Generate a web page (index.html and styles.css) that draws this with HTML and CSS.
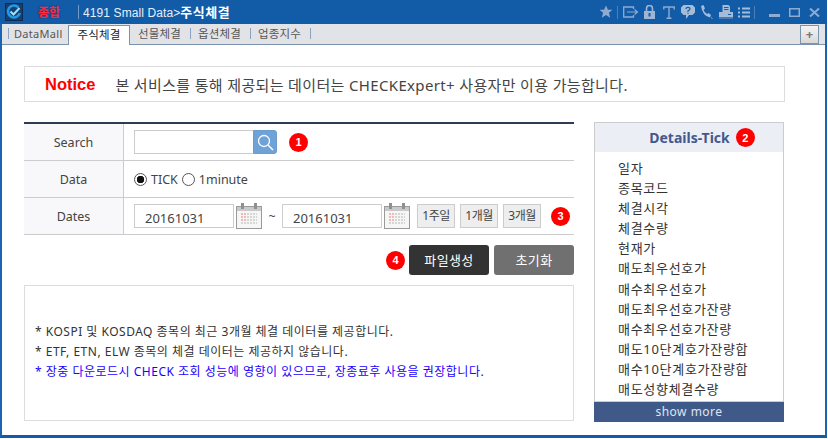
FILE: index.html
```html
<!DOCTYPE html>
<html lang="ko">
<head>
<meta charset="utf-8">
<title>4191 Small Data</title>
<link rel="stylesheet" href="styles.css">
</head>
<body>
<div class="window">
  <header class="titlebar">
    <svg class="logo" width="18" height="18" viewBox="0 0 18 18"><rect x="0.5" y="0.5" width="17" height="17" fill="#17406f" stroke="#0e2c52"/><path d="M13.500 4.500A6 6 0 1 0 14.800 10" fill="none" stroke="#1f9ae6" stroke-width="2.600"/><path d="M5.500 8.500l3 3 6-6.500" fill="none" stroke="#9fe0ff" stroke-width="2"/></svg>
    <span class="total">종합</span>
    <span class="vsep"></span>
    <span class="title">4191 Small Data&gt;<b>주식체결</b></span>
    <span class="spacer"></span>
    <svg class="star" width="14" height="14" viewBox="0 0 14 14"><path d="M7 .5l1.900 4.300h4.600l-3.600 3 1.300 5L7 10l-4.200 2.800 1.300-5-3.600-3h4.600z" fill="#8fabd0"/></svg>
    <span class="vsep dim"></span>
    <svg class="ic-exit" width="16" height="12" viewBox="0 0 16 12"><path d="M10.500 3V1H.700v10h9.800V9" fill="none" stroke="#8fabd0" stroke-width="1.300"/><path d="M4 6h10M11.500 3.500L14.500 6l-3 2.500" fill="none" stroke="#8fabd0" stroke-width="1.200"/></svg>
    <svg class="ic-lock" width="11" height="14" viewBox="0 0 11 14"><path d="M2.500 6V3.500a3 3 0 0 1 6 0V6" fill="none" stroke="#9db6d6" stroke-width="1.600"/><path d="M0 6h11v8H0z" fill="#9db6d6"/><rect x="4.500" y="8" width="2" height="3.500" fill="#235c9a"/></svg>
    <svg class="ic-t" width="12" height="13" viewBox="0 0 12 13"><path d="M.800 3.500V1h10.400v2.500M6 1v11M3.500 12.300h5" fill="none" stroke="#8fabd0" stroke-width="1.400"/></svg>
    <svg class="ic-help" width="14" height="14" viewBox="0 0 14 14"><path d="M2.500 0h9L14 2.500v5L11.500 10H8l-3 4v-4H2.500L0 7.500v-5z" fill="#a5bcd9"/><path d="M5 4q0-1.700 2-1.700T9 4q0 1-2 1.800v1.200M7 7.800v1" fill="none" stroke="#1f5c9e" stroke-width="1.200"/></svg>
    <svg class="ic-phone" width="13" height="14" viewBox="0 0 13 14"><path d="M1 1l2.500-1L5 3.500 3.500 5q1 2.500 3.500 4l1.500-1L11 10l-1 2.500Q2.500 11 1 1z" fill="#a5bcd9"/><path d="M11 12.500l1.500 1" stroke="#8fabd0"/></svg>
    <svg class="ic-print" width="14" height="14" viewBox="0 0 14 14"><path d="M3.500 0h6L11 1.500V7H3.500z" fill="#a5bcd9"/><path d="M0 7h14v5H0z" fill="#a5bcd9"/><path d="M0 13h14" stroke="#7f9cc4"/><path d="M5 2.500h4.500M5 4.500h4.500M9 9.500h3" stroke="#1f5c9e"/></svg>
    <svg class="ic-list" width="12" height="11" viewBox="0 0 12 11"><path d="M0 1.500h2M4 1.500h8M0 5.500h2M4 5.500h8M0 9.500h2M4 9.500h8" stroke="#a5bcd9" stroke-width="2"/></svg>
    <span class="vsep dim"></span>
    <svg class="win" width="11" height="11" viewBox="0 0 11 11"><rect y="7" width="11" height="3" fill="#8fabd0"/></svg>
    <svg class="win" width="11" height="11" viewBox="0 0 11 11"><rect x="0.750" y="1.750" width="9.500" height="7.500" fill="none" stroke="#8fabd0" stroke-width="1.500"/></svg>
    <svg class="win" width="11" height="11" viewBox="0 0 11 11"><path d="M1 1.500l9 8M10 1.500l-9 8" stroke="#8fabd0" stroke-width="2"/></svg>
  </header>
  <nav class="tabs">
    <span class="tsep"></span><span class="tab-latin">DataMall</span>
    <span class="tab-active">주식체결</span>
    <span class="tab">선물체결</span><span class="tsep"></span>
    <span class="tab">옵션체결</span><span class="tsep"></span>
    <span class="tab">업종지수</span><span class="tsep"></span>
    <span class="spacer"></span>
    <span class="plus">+</span>
  </nav>
  <main class="content">
    <div class="notice"><span class="notice-head">Notice</span><span class="notice-text">본 서비스를 통해 제공되는 데이터는 CHECKExpert+ 사용자만 이용 가능합니다.</span></div>
    <div class="columns">
      <section class="left">
        <div class="form">
          <div class="row">
            <div class="label">Search</div>
            <div class="cell">
              <span class="search"><span class="search-input"></span><span class="search-btn"><svg width="17" height="17" viewBox="0 0 17 17"><circle cx="7" cy="7" r="5.500" fill="none" stroke="#fff" stroke-width="1.300"/><path d="M11 11l5 5" stroke="#fff" stroke-width="1.500"/></svg></span></span>
              <span class="badge b1">1</span>
            </div>
          </div>
          <div class="row">
            <div class="label">Data</div>
            <div class="cell radios">
              <span class="radio on"></span><span>TICK</span>
              <span class="radio"></span><span>1minute</span>
            </div>
          </div>
          <div class="row">
            <div class="label">Dates</div>
            <div class="cell dates">
              <span class="date">20161031</span>
              <svg class="cal" width="26" height="26" viewBox="0 0 26 26"><rect x="0.500" y="3.500" width="25" height="22" fill="#f6f6f6" stroke="#9a9a9a"/><rect x="1" y="4" width="24" height="4" fill="#c9c9c9"/><rect x="5" y="0" width="3" height="6" fill="#8f8f8f"/><rect x="18" y="0" width="3" height="6" fill="#8f8f8f"/><path d="M5 11h16M5 14h16M5 17h16M5 20h16" stroke="#d6d6d6" stroke-width="2" stroke-dasharray="2 1"/><path d="M5 11h5M5 14h5M5 17h5" stroke="#f3b9b9" stroke-width="2" stroke-dasharray="2 1"/></svg>
              <span class="tilde">~</span>
              <span class="date">20161031</span>
              <svg class="cal" width="26" height="26" viewBox="0 0 26 26"><rect x="0.500" y="3.500" width="25" height="22" fill="#f6f6f6" stroke="#9a9a9a"/><rect x="1" y="4" width="24" height="4" fill="#c9c9c9"/><rect x="5" y="0" width="3" height="6" fill="#8f8f8f"/><rect x="18" y="0" width="3" height="6" fill="#8f8f8f"/><path d="M5 11h16M5 14h16M5 17h16M5 20h16" stroke="#d6d6d6" stroke-width="2" stroke-dasharray="2 1"/><path d="M5 11h5M5 14h5M5 17h5" stroke="#f3b9b9" stroke-width="2" stroke-dasharray="2 1"/></svg>
              <span class="period first">1주일</span>
              <span class="period">1개월</span>
              <span class="period">3개월</span>
              <span class="badge b3">3</span>
            </div>
          </div>
        </div>
        <div class="actions">
          <span class="badge">4</span>
          <span class="btn dark">파일생성</span>
          <span class="btn gray">초기화</span>
        </div>
        <div class="info">
          <p>* KOSPI 및 KOSDAQ 종목의 최근 3개월 체결 데이터를 제공합니다.</p>
          <p>* ETF, ETN, ELW 종목의 체결 데이터는 제공하지 않습니다.</p>
          <p class="blue">* 장중 다운로드시 CHECK 조회 성능에 영향이 있으므로, 장종료후 사용을 권장합니다.</p>
        </div>
      </section>
      <aside class="details">
        <h2 class="details-head">Details-Tick <span class="badge">2</span></h2>
        <ul class="fields">
          <li>일자</li><li>종목코드</li><li>체결시각</li><li>체결수량</li><li>현재가</li><li>매도최우선호가</li><li>매수최우선호가</li><li>매도최우선호가잔량</li><li>매수최우선호가잔량</li><li>매도10단계호가잔량합</li><li>매수10단계호가잔량합</li><li>매도성향체결수량</li>
        </ul>
        <div class="more">show more</div>
      </aside>
    </div>
  </main>
</div>
</body>
</html>
```
FILE: styles.css
```css
* { box-sizing: border-box; }
html, body { margin: 0; padding: 0; height: 100%; background: #fff; overflow: hidden; }
body { font-family: "Noto Sans", "Noto Sans CJK KR", sans-serif; font-size: 12.500px; color: #444; }
.window { width: 827px; height: 438px; display: flex; flex-direction: column; background: #fff; border-right: 2px solid #1565b5; border-left: 2px solid #1b64b4; border-bottom: 3px solid #135ba8; }
.titlebar { height: 24px; flex: none; display: flex; align-items: center; background: #125ba7; padding: 0 7px 0 5px; margin: 0 -2px; }
.total { margin-left: 15px; width: 24px; color: #ff2a3a; font-size: 12px; font-weight: 700; white-space: nowrap; text-shadow: 0 0 2px #2c2c6a; }
.vsep { width: 1px; height: 14px; background: #6f9ac9; margin-left: 16px; }
.vsep.dim { height: 13px; background: #4d7fb6; margin: 0 5px 0 4px; }
.title { margin-left: 4px; color: #e8eff8; font-family: "Liberation Sans", "Noto Sans CJK KR", sans-serif; font-size: 12px; letter-spacing: .1px; line-height: 24px; white-space: nowrap; }
.title b { font-size: 13px; color: #fff; font-family: "Noto Sans CJK KR", sans-serif; font-weight: 700; letter-spacing: .5px; }
.spacer { flex: 1; }
.star, .ic-exit, .ic-lock, .ic-t, .ic-help, .ic-phone, .ic-print, .ic-list, .win { flex: none; }
.ic-lock { margin-left: 5px; }
.ic-t { margin-left: 8px; }
.ic-help { margin-left: 6px; }
.ic-phone { margin-left: 5px; }
.ic-print { margin-left: 6px; }
.ic-list { margin-left: 5px; }
.win { margin-left: 9px; }
.tabs { height: 21px; flex: none; display: flex; align-items: flex-start; background: #e2e3e6; border-bottom: 1px solid #7c93ad; padding-left: 6px; }
.tsep { width: 1px; height: 11px; background: #8ba3bf; margin-top: 4px; flex: none; }
.tab, .tab-latin, .tab-active { color: #555; line-height: 19px; white-space: nowrap; flex: none; }
.tab-latin { width: 54px; margin-left: 5px; font-size: 11px; letter-spacing: .3px; }
.tab { width: 47px; font-size: 11.500px; letter-spacing: .2px; }
.tab-active { width: 62px; height: 20px; margin-top: 1px; background: #fff; color: #222; border: 1px solid #7c93ad; border-bottom: 0; text-align: center; margin-right: 8px; font-size: 11.500px; letter-spacing: .2px; line-height: 18px; }
.tab + .tsep { margin-left: 5px; margin-right: 7px; }
.plus { width: 19px; height: 19px; margin: 1px 6px 0 0; border: 1px solid #7c93ad; background: linear-gradient(#f4f4f4, #d9d9d9); color: #777; text-align: center; font-size: 13px; line-height: 17px; font-weight: 700; flex: none; }
.content { flex: 1; padding: 21px 40px 0 22px; min-height: 0; }
.notice { height: 36px; border: 1px solid #ddd; display: flex; align-items: center; gap: 20px; padding-left: 20px; color: #444; white-space: nowrap; }
.notice-head { color: #f00; font-size: 16.500px; font-weight: 700; font-family: "Liberation Sans", sans-serif; }
.notice-text { font-size: 15px; letter-spacing: .35px; }
.columns { display: flex; gap: 20px; margin-top: 20px; }
.left { width: 550px; flex: none; }
.form { border-top: 2px solid #2f3b52; }
.row { display: flex; height: 37px; border-bottom: 1px solid #ccc; }
.label { width: 100px; flex: none; background: #f8f8fa; border-right: 1px solid #ccc; display: flex; align-items: center; justify-content: center; }
.cell { flex: 1; display: flex; align-items: center; padding-left: 10px; }
.search { display: flex; width: 143px; height: 24px; }
.search-input { width: 119px; border: 1px solid #ccc; border-right: 0; }
.search-btn { width: 24px; background: #6fa3d8; border-radius: 0 3px 3px 0; display: flex; align-items: center; justify-content: center; border: 1px solid #6a9ccf; }
.badge { display: inline-flex; flex: none; width: 19px; height: 19px; border-radius: 50%; background: #f00; color: #fff; font-size: 11px; font-weight: 700; align-items: center; justify-content: center; font-family: "Liberation Sans", sans-serif; }
.b1 { margin-left: 12px; }
.radios { gap: 4px; font-size: 12.500px; }
.radio { width: 13px; height: 13px; border: 1px solid #555; border-radius: 50%; display: inline-block; background: #fff; }
.radio.on { background: radial-gradient(circle, #111 0 3.500px, #fff 4px); }
.date { width: 100px; height: 24px; border: 1px solid #ccc; padding-left: 10px; line-height: 26px; font-size: 13px; color: #444; flex: none; }
.date + .cal { margin-left: 2px; }
.cal { flex: none; }
.tilde { width: 20px; text-align: center; flex: none; }
.period { width: 38px; height: 24px; margin-left: 5px; border: 1px solid #ccc; background: #eee; text-align: center; line-height: 22px; font-size: 12px; letter-spacing: -.5px; color: #444; flex: none; }
.period.first { margin-left: 7px; }
.b3 { margin-left: 10px; }
.actions { display: flex; align-items: center; justify-content: flex-end; gap: 5px; margin-top: 10px; }
.actions .badge { margin-right: -1px; }
.btn { width: 80px; height: 30px; border-radius: 3px; color: #fff; font-size: 13px; letter-spacing: .4px; text-align: center; line-height: 30px; }
.dark { background: #333; }
.gray { background: #707070; }
.info { height: 136px; margin-top: 10px; border: 1px solid #ddd; padding-top: 36px; padding-left: 10px; font-size: 12px; letter-spacing: .5px; color: #333; }
.info p { margin: 0; height: 20px; line-height: 20px; white-space: nowrap; }
.info .blue { color: #1a00ff; }
.details { width: 190px; flex: none; display: flex; flex-direction: column; height: 300px; }
.details-head { margin: 0; height: 30px; background: #eceef6; border: 1px solid #ccc; border-bottom: 0; color: #44598a; font-size: 14px; font-weight: 700; display: flex; align-items: center; justify-content: center; gap: 6px; padding-left: 26px; }
.fields { list-style: none; margin: 0; padding: 6px 0 0 23px; flex: 1; border: 1px solid #ccc; border-width: 0 1px 1px; font-size: 13px; letter-spacing: .7px; color: #333; overflow: hidden; }
.fields li { height: 20.100px; line-height: 20px; white-space: nowrap; }
.more { height: 20px; flex: none; background: #3f5a88; color: #dfe5f0; text-align: center; line-height: 20px; font-size: 12px; letter-spacing: .5px; }
```
